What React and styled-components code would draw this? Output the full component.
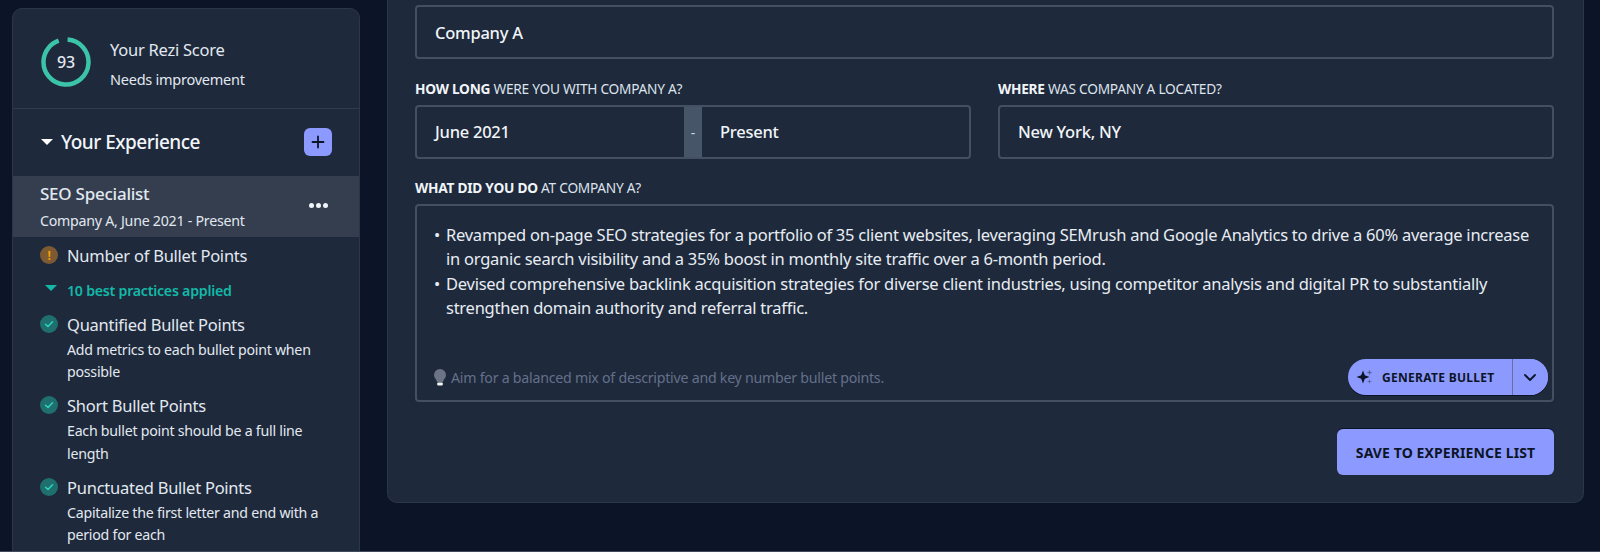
import React from 'react'
import styled, {createGlobalStyle} from 'styled-components'

const Global = createGlobalStyle`
  html, body {
    margin: 0;
    height: 552px;
    overflow: hidden;
    background: #0c1527;
  }
  * {
    box-sizing: border-box;
  }
`

const Page = styled.div`
  display: flex;
  align-items: flex-start;
  height: 552px;
  overflow: hidden;
  font-family: "Noto Sans", sans-serif;
  letter-spacing: -0.25px;
  color: #e2e8f0;
  border-bottom: 1px solid #3f4a5c;
`

const Sidebar = styled.aside`
  flex: 0 0 348px;
  height: 600px;
  margin: 8px 0 0 12px;
  background: #1e293b;
  border: 1px solid #2b3749;
  border-radius: 10px;
`

const ScoreRow = styled.div`
  display: flex;
  align-items: center;
  gap: 19px;
  height: 100px;
  padding: 8px 0 0 28px;
  border-bottom: 1px solid #2f3b4e;
`

const Ring = styled.div`
  position: relative;
  width: 50px;
  height: 50px;
  margin-bottom: 1px;
  display: flex;
  align-items: center;
  justify-content: center;
  font-size: 16px;
  font-weight: 500;
`

const RingArc = styled.svg`
  position: absolute;
  inset: 0;
`

const ScoreText = styled.div`
  padding-top: 2px;
`

const ScoreTitle = styled.div`
  font-size: 16.5px;
  line-height: 22px;
  margin-bottom: 8px;
`

const ScoreNote = styled.div`
  font-size: 14.5px;
  line-height: 20px;
`

const ExperienceHead = styled.div`
  display: flex;
  align-items: center;
  height: 67px;
  padding: 0 27px 1px 28px;
`

const Caret = styled.span`
  width: 0;
  height: 0;
  border-left: 6px solid transparent;
  border-right: 6px solid transparent;
  border-top: 6px solid ${p => p.$color || '#fff'};
  margin-right: ${p => p.$gap || 8}px;
`

const HeadTitle = styled.div`
  flex: 1;
  font-size: 19px;
  font-weight: 500;
  letter-spacing: -0.5px;
  color: #f1f5f9;
`

const AddButton = styled.button`
  width: 28px;
  height: 28px;
  padding: 0;
  border: 0;
  border-radius: 6px;
  background: #8c9aff;
  display: flex;
  align-items: center;
  justify-content: center;
`

const ActiveItem = styled.div`
  display: flex;
  align-items: center;
  justify-content: space-between;
  height: 61px;
  padding: 0 31px 0 27px;
  background: #343e4f;
`

const ItemTitle = styled.div`
  font-size: 17px;
  font-weight: 500;
  line-height: 22px;
  margin-bottom: 6px;
`

const ItemSub = styled.div`
  font-size: 14.2px;
  line-height: 20px;
`

const Dots = styled.div`
  display: flex;
  gap: 2px;
  margin-top: -2px;
`

const Dot = styled.span`
  width: 5px;
  height: 5px;
  border-radius: 50%;
  background: #f1f5f9;
`

const Checks = styled.div`
  padding: 7px 20px 0 27px;
`

const CheckRow = styled.div`
  display: flex;
  align-items: center;
  gap: 9px;
  height: 24px;
`

const Badge = styled.span`
  flex: 0 0 18px;
  height: 18px;
  border-radius: 50%;
  background: ${p => p.$bg};
  display: flex;
  align-items: center;
  justify-content: center;
  margin-top: -2px;
  color: #f59e0b;
  font-size: 12px;
  font-weight: 700;
`

const CheckTitle = styled.div`
  font-size: 16.5px;
  line-height: 24px;
`

const Applied = styled.div`
  display: flex;
  align-items: center;
  height: 24px;
  margin: 10px 0 10.5px 5px;
  font-size: 14.2px;
  font-weight: 600;
  color: #14b8a6;
`

const AppliedCaret = styled(Caret)`
  margin-top: -4px;
`

const CheckBlock = styled.div`
  margin-bottom: 10.5px;
`

const CheckNote = styled.div`
  margin: 2px 0 0 27px;
  font-size: 14.2px;
  line-height: 22.5px;
`

const Panel = styled.main`
  flex: 0 0 1197px;
  margin-left: 27px;
  height: 503px;
  padding: 5px 29px 0 27px;
  background: #1e293b;
  border: 1px solid #2b3749;
  border-top: 0;
  border-radius: 0 0 10px 10px;
`

const Field = styled.div`
  display: flex;
  align-items: center;
  height: 54px;
  padding: 0 18px ${p => (p.$lift ? 2 : 0)}px;
  border: 2px solid #435064;
  border-radius: 4px;
  font-size: 16.5px;
  font-weight: 500;
  color: #f1f5f9;
`

const Columns = styled.div`
  display: grid;
  grid-template-columns: 1fr 1fr;
  gap: 27px;
`

const Label = styled.div`
  margin: ${p => (p.$tight ? '19px 0 6px' : '19.5px 0 6.5px')};
  height: 20px;
  font-size: 13.7px;
  line-height: 20px;
  color: #dde3ec;
  text-transform: uppercase;

  b {
    font-weight: 700;
    color: #f1f5f9;
  }
`

const DateGroup = styled.div`
  display: flex;
  height: 54px;
  border: 2px solid #435064;
  border-radius: 4px;
`

const DatePart = styled.div`
  flex: 1;
  display: flex;
  align-items: center;
  padding: 0 18px 2px;
  font-size: 16.5px;
  font-weight: 500;
  color: #f1f5f9;
`

const DateSep = styled.div`
  flex: 0 0 18px;
  display: flex;
  align-items: center;
  justify-content: center;
  background: #475569;
  color: #cbd5e1;
  font-size: 14px;
`

const TextBox = styled.div`
  display: flex;
  flex-direction: column;
  height: 198px;
  padding: 17px 4px 5px 16px;
  border: 2px solid #435064;
  border-radius: 4px;
`

const Bullets = styled.div`
  flex: 1;
  padding: 0 14px 0 1px;
`

const Bullet = styled.div`
  display: flex;
  font-size: 16.5px;
  line-height: 24.3px;
  color: #e8edf4;

  &::before {
    content: '•';
    flex: 0 0 12px;
  }
`

const BoxFooter = styled.div`
  display: flex;
  align-items: center;
  justify-content: space-between;
`

const Hint = styled.div`
  display: flex;
  align-items: center;
  gap: 4px;
  font-size: 14.2px;
  color: #64708a;
`

const GenerateButton = styled.div`
  display: flex;
  align-items: stretch;
  width: 200px;
  height: 36px;
  border-radius: 18px;
  background: linear-gradient(100deg, #8c9aff 78%, #9c94e8 100%);
  box-shadow: 0 1px 0 #0c1527;
  color: #0c1527;
`

const GenerateMain = styled.div`
  flex: 1;
  display: flex;
  align-items: center;
  gap: 8px;
  padding-left: 8px;
  font-size: 12px;
  font-weight: 700;
  letter-spacing: 0.3px;
`

const GenerateToggle = styled.div`
  flex: 0 0 36px;
  display: flex;
  align-items: center;
  justify-content: center;
  padding-right: 2px;
  background: #8c9aff;
  border-left: 1px solid #66709f;
  border-radius: 0 18px 18px 0;
`

const Actions = styled.div`
  display: flex;
  justify-content: flex-end;
  margin-top: 27px;
`

const SaveButton = styled.button`
  width: 217px;
  height: 46px;
  border: 0;
  border-radius: 6px;
  background: #8c9aff;
  box-shadow: 0 -1px 0 #0c1527;
  color: #0c1527;
  font-family: inherit;
  font-size: 14px;
  font-weight: 700;
  letter-spacing: 0.1px;
`

const practices = [
  {title: 'Quantified Bullet Points', note: 'Add metrics to each bullet point when possible'},
  {title: 'Short Bullet Points', note: 'Each bullet point should be a full line length'},
  {title: 'Punctuated Bullet Points', note: 'Capitalize the first letter and end with a period for each'}
]

const bullets = [
  'Revamped on-page SEO strategies for a portfolio of 35 client websites, leveraging SEMrush and Google Analytics to drive a 60% average increase in organic search visibility and a 35% boost in monthly site traffic over a 6-month period.',
  'Devised comprehensive backlink acquisition strategies for diverse client industries, using competitor analysis and digital PR to substantially strengthen domain authority and referral traffic.'
]

const CheckIcon = () => (
  <svg width="10" height="10" viewBox="0 0 10 10" fill="none">
    <path d="M1.5 5.2 4 7.5 8.5 2.8" stroke="#2dd4bf" strokeWidth="1.5" strokeLinecap="round" strokeLinejoin="round" />
  </svg>
)

const Sparkle = () => (
  <svg width="18" height="18" viewBox="0 0 18 18" fill="#0c1527">
    <path d="M7 2.500 8.800 7.200 13.500 9 8.800 10.800 7 15.500 5.200 10.800 0.500 9 5.200 7.200Z" />
    <path d="M13.500 1.500 14.200 3.800 16.500 4.500 14.200 5.200 13.500 7.500 12.800 5.200 10.500 4.500 12.800 3.800Z" fill="#5a6396" />
    <path d="M13.500 11 14.100 12.900 16 13.500 14.100 14.100 13.500 16 12.900 14.100 11 13.500 12.900 12.900Z" fill="#5a6396" />
  </svg>
)

const Bulb = () => (
  <svg width="14" height="18" viewBox="0 0 14 18">
    <path d="M7 1a6 6 0 0 0-6 6c0 2.400 1.500 3.600 2.400 5.200.4.700.5 1.300.6 1.800h6c.1-.5.2-1.100.6-1.800C11.500 10.600 13 9.400 13 7a6 6 0 0 0-6-6Z" fill="#6b7485" />
    <rect x="4.200" y="14.600" width="5.600" height="2.800" rx="1" fill="#f1f5f9" />
  </svg>
)

export default function App() {
  return (
    <>
      <Global />
      <Page>
        <Sidebar>
          <ScoreRow>
            <Ring>
              <RingArc width="50" height="50" viewBox="0 0 50 50">
                <circle
                  cx="25"
                  cy="25"
                  r="22.500"
                  fill="none"
                  stroke="#3cc4a9"
                  strokeWidth="4.500"
                  strokeDasharray="131.500 141.400"
                  transform="rotate(-86 25 25)"
                />
              </RingArc>
              93
            </Ring>
            <ScoreText>
              <ScoreTitle>Your Rezi Score</ScoreTitle>
              <ScoreNote>Needs improvement</ScoreNote>
            </ScoreText>
          </ScoreRow>
          <ExperienceHead>
            <Caret />
            <HeadTitle>Your Experience</HeadTitle>
            <AddButton>
              <svg width="14" height="14" viewBox="0 0 14 14" stroke="#0c1527" strokeWidth="1.800" strokeLinecap="round">
                <path d="M7 1.500v11M1.500 7h11" />
              </svg>
            </AddButton>
          </ExperienceHead>
          <ActiveItem>
            <div>
              <ItemTitle>SEO Specialist</ItemTitle>
              <ItemSub>Company A, June 2021 - Present</ItemSub>
            </div>
            <Dots>
              <Dot />
              <Dot />
              <Dot />
            </Dots>
          </ActiveItem>
          <Checks>
            <CheckRow>
              <Badge $bg="#7d5a32">!</Badge>
              <CheckTitle>Number of Bullet Points</CheckTitle>
            </CheckRow>
            <Applied>
              <AppliedCaret $color="#14b8a6" $gap={10} />
              10 best practices applied
            </Applied>
            {practices.map(item => (
              <CheckBlock key={item.title}>
                <CheckRow>
                  <Badge $bg="#1f6f6e">
                    <CheckIcon />
                  </Badge>
                  <CheckTitle>{item.title}</CheckTitle>
                </CheckRow>
                <CheckNote>{item.note}</CheckNote>
              </CheckBlock>
            ))}
          </Checks>
        </Sidebar>
        <Panel>
          <Field>Company A</Field>
          <Columns>
            <div>
              <Label>
                <b>How long</b> were you with Company A?
              </Label>
              <DateGroup>
                <DatePart>June 2021</DatePart>
                <DateSep>-</DateSep>
                <DatePart>Present</DatePart>
              </DateGroup>
            </div>
            <div>
              <Label>
                <b>Where</b> was Company A located?
              </Label>
              <Field $lift>New York, NY</Field>
            </div>
          </Columns>
          <Label $tight>
            <b>What did you do</b> at Company A?
          </Label>
          <TextBox>
            <Bullets>
              {bullets.map(text => (
                <Bullet key={text}>{text}</Bullet>
              ))}
            </Bullets>
            <BoxFooter>
              <Hint>
                <Bulb />
                Aim for a balanced mix of descriptive and key number bullet points.
              </Hint>
              <GenerateButton>
                <GenerateMain>
                  <Sparkle />
                  GENERATE BULLET
                </GenerateMain>
                <GenerateToggle>
                  <svg width="14" height="9" viewBox="0 0 14 9" fill="none" stroke="#0c1527" strokeWidth="1.800" strokeLinecap="round" strokeLinejoin="round">
                    <path d="M2 2l5 5 5-5" />
                  </svg>
                </GenerateToggle>
              </GenerateButton>
            </BoxFooter>
          </TextBox>
          <Actions>
            <SaveButton>SAVE TO EXPERIENCE LIST</SaveButton>
          </Actions>
        </Panel>
      </Page>
    </>
  )
}
